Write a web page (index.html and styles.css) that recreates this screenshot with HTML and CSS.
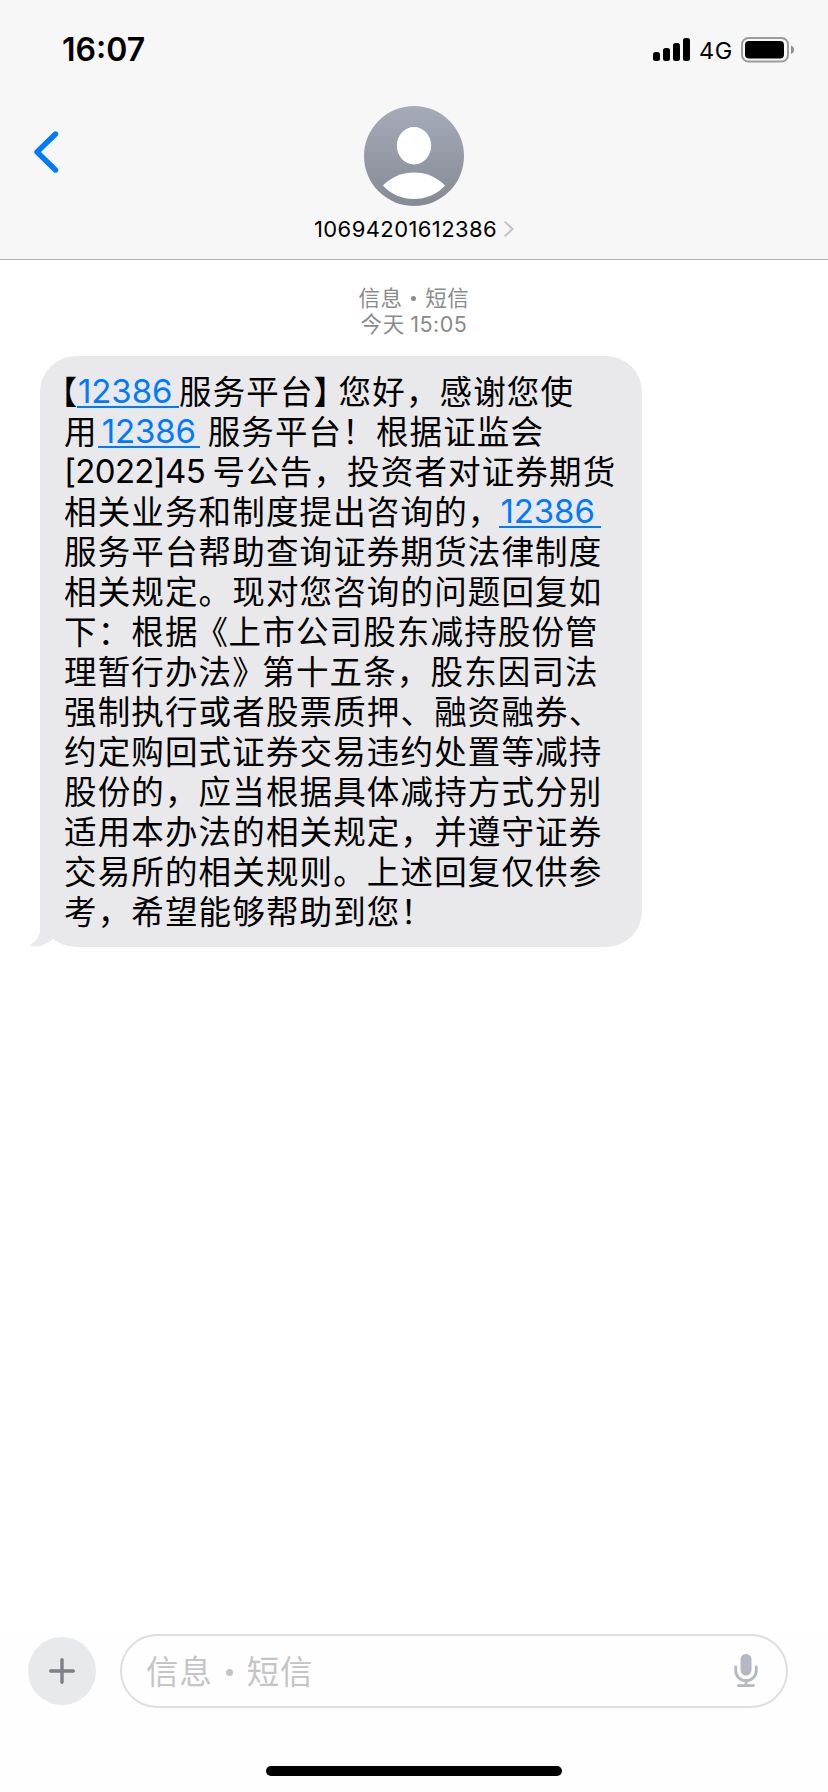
FILE: index.html
```
<!DOCTYPE html>
<html lang="zh-CN">
<head>
<meta charset="utf-8">
<title>信息</title>
<link rel="stylesheet" href="styles.css">
</head>
<body>
<div class="phone">
  <header class="header">
    <div class="status">
      <span class="clock">16:07</span>
      <div class="status-right">
        <svg class="signal" width="38" height="24" viewBox="0 0 38 24"><rect x="0" y="14" width="7" height="9" rx="2.5"/><rect x="10" y="10" width="7" height="13" rx="2.5"/><rect x="20" y="5" width="7" height="18" rx="2.5"/><rect x="30" y="0" width="7" height="23" rx="2.5"/></svg>
        <span class="network">4G</span>
        <svg class="battery" width="54" height="26" viewBox="0 0 54 26"><rect x="1" y="1" width="46" height="23.5" rx="6.5" fill="none" stroke="#9b9b9b" stroke-width="2"/><rect x="4" y="4" width="39" height="17.500" rx="4"/><path d="M50 8.500c4 1.500 4 7 0 8.500z" fill="#8e8e8e"/></svg>
      </div>
    </div>
    <div class="nav">
      <svg class="back" width="26" height="44" viewBox="0 0 26 44"><path d="M22.500 4 4 22 22.500 40" fill="none" stroke="#007aff" stroke-width="5.400" stroke-linecap="round" stroke-linejoin="round"/></svg>
      <div class="contact">
        <svg class="avatar" width="100" height="100" viewBox="0 0 100 100">
          <defs><linearGradient id="sky" x1="0" y1="0" x2="0" y2="1"><stop offset="0" stop-color="#a5abb9"/><stop offset="1" stop-color="#858a94"/></linearGradient></defs>
          <circle cx="50" cy="50" r="50" fill="url(#sky)"/>
          <ellipse cx="50" cy="39.700" rx="17.200" ry="18.700" fill="#fff"/>
          <path d="M19 79.500C35 62 65 62 81 79.500C65 97.500 35 97.500 19 79.500z" fill="#fff"/>
        </svg>
        <div class="contact-name"><span>10694201612386</span><svg width="10" height="16" viewBox="0 0 10 16"><path d="M1.300 1.200 8.500 8 1.300 14.800" fill="none" stroke="#c4c4c6" stroke-width="2" stroke-linecap="round"/></svg></div>
      </div>
    </div>
  </header>
  <main class="thread">
    <div class="stamp"><div class="stamp-service">信息<i class="dot"></i>短信</div><div class="stamp-time">今天 <span class="num">15:05</span></div></div>
    <div class="bubble">
      <svg class="tail" width="34" height="40" viewBox="0 0 34 40"><path d="M11 0V22C11 29 7 35 0 38.600C9 41 18 38 24 31.500L34 22V0z" fill="#e9e9eb"/></svg>
      <p class="line"><span class="half open">【</span><a class="link">12386</a>服务平台<span class="half close">】</span>您好，感谢您使</p>
      <p class="line">用<a class="link inset">12386</a>服务平台！根据证监会</p>
      <p class="line"><span class="figure">[2022]45</span>号公告，投资者对证券期货</p>
      <p class="line">相关业务和制度提出咨询的，<a class="link last">12386</a></p>
      <p class="line">服务平台帮助查询证券期货法律制度</p>
      <p class="line">相关规定。现对您咨询的问题回复如</p>
      <p class="line">下：根据<span class="quote left">《</span>上市公司股东减持股份管</p>
      <p class="line">理暂行办法<span class="quote">》</span>第十五条，股东因司法</p>
      <p class="line">强制执行或者股票质押、融资融券、</p>
      <p class="line">约定购回式证券交易违约处置等减持</p>
      <p class="line">股份的，应当根据具体减持方式分别</p>
      <p class="line">适用本办法的相关规定，并遵守证券</p>
      <p class="line">交易所的相关规则。上述回复仅供参</p>
      <p class="line">考，希望能够帮助到您！</p>
    </div>
  </main>
  <footer class="footer">
    <div class="composer">
      <div class="add"><svg width="26" height="26" viewBox="0 0 26 26"><path d="M13 1.700V24.300M1.700 13H24.300" stroke="#7f7f86" stroke-width="3.400" stroke-linecap="round"/></svg></div>
      <div class="field"><span class="placeholder">信息<i class="dot"></i>短信</span>
        <svg class="mic" width="24" height="34" viewBox="0 0 24 34"><rect x="6.500" y="0" width="11" height="21.500" rx="5.500" fill="#b3b8c1"/><path d="M1.700 13v3.500a10.100 10.100 0 0 0 20.600 0V13M12 26.500v5M4.500 31.600h15" fill="none" stroke="#b3b8c1" stroke-width="2.800" stroke-linecap="round"/></svg>
      </div>
    </div>
    <div class="home"></div>
  </footer>
</div>
</body>
</html>
```
FILE: styles.css
```
* { box-sizing: border-box; }
body { margin: 0; background: #fff; }
svg { display: block; flex: none; }
.phone {
  width: 828px;
  height: 1792px;
  display: flex;
  flex-direction: column;
  overflow: hidden;
  background: #fefefe;
  color: #000;
  font-family: Inter, "Noto Sans CJK SC", sans-serif;
}
.header {
  height: 260px;
  background: #f7f7f7;
  border-bottom: 1px solid #b0b0b0;
}
.status {
  height: 100px;
  padding: 0 33px 0 62px;
  display: flex;
  align-items: center;
  justify-content: space-between;
}
.clock { font-size: 32px; font-weight: 600; line-height: 40px; }
.status-right { display: flex; align-items: center; }
.network { font-size: 23.5px; line-height: 28px; width: 34px; margin: 1px 8px 0 8px; letter-spacing: 0.5px; }
.signal { margin-bottom: 1px; }
.battery { margin-bottom: 1px; }
.nav {
  display: grid;
  grid-template-columns: 62px 1fr 62px;
  padding-top: 6px;
}
.back { margin: 24px 0 0 33px; }
.contact { display: flex; flex-direction: column; align-items: center; }
.contact-name {
  display: flex;
  align-items: center;
  gap: 7px;
  margin-top: 8px;
  line-height: 30px;
  font-size: 22px;
  letter-spacing: 0.4px;
}
.thread { flex: 1; background: #fff; }
.stamp {
  padding-top: 24px;
  height: 96px;
  text-align: center;
  font-family: "Noto Sans CJK SC", sans-serif;
  font-size: 21.5px;
  line-height: 26px;
  color: #8a8a8e;
  letter-spacing: 0.6px;
}
.stamp-service, .stamp-time { height: 26px; }
.num { font-family: Inter, sans-serif; letter-spacing: 0.5px; }
.dot {
  display: inline-block;
  width: 0.22em;
  height: 0.22em;
  margin: 0 0.43em 0.24em 0.4em;
  border-radius: 50%;
  background: currentColor;
}
.bubble {
  position: relative;
  width: 602px;
  height: 591px;
  margin-left: 40px;
  padding: 14px 0 0 24px;
  border-radius: 36px;
  background: #e9e9eb;
}
.tail { position: absolute; left: -11px; bottom: 0; }
.line {
  height: 40px;
  margin: 0;
  font-family: "Noto Sans CJK SC", sans-serif;
  font-size: 32.5px;
  line-height: 40px;
  letter-spacing: 1.15px;
  white-space: nowrap;
}
.link, .figure, .half, .quote { display: inline-block; height: 38px; vertical-align: top; }
.link {
  width: 102px;
  padding-left: 1px;
  border-bottom: 2px solid #007aff;
  color: #007aff;
  font-family: Inter, sans-serif;
  font-size: 33px;
  line-height: 43px;
  letter-spacing: -0.1px;
}
.inset { padding-left: 4px; margin-right: 8px; }
.last { margin-left: -2px; }
.figure { width: 148.5px; font-family: Inter, sans-serif; font-size: 33px; line-height: 43px; letter-spacing: -0.7px; }
.half { font-feature-settings: "halt" 1; letter-spacing: 0; }
.open { width: 13px; text-indent: -3px; }
.close { width: 25px; }
.quote { width: 30px; }
.left { text-indent: -3px; }
.footer { height: 158px; }
.composer { display: flex; align-items: center; gap: 24px; padding-left: 28px; }
.add {
  width: 68px;
  height: 68px;
  display: grid;
  place-items: center;
  border-radius: 50%;
  background: #e8e9eb;
}
.field {
  width: 668px;
  height: 74px;
  display: flex;
  align-items: center;
  justify-content: space-between;
  padding: 0 28px 0 24px;
  border: 2px solid #dfdfe0;
  border-radius: 37px;
}
.placeholder {
  margin-top: -3px;
  font-family: "Noto Sans CJK SC", sans-serif;
  font-size: 32.5px;
  line-height: 40px;
  letter-spacing: 0.8px;
  color: #c5c5c7;
}
.home { width: 296px; height: 10px; margin: 58px auto 0; border-radius: 5px; background: #000; }
```
